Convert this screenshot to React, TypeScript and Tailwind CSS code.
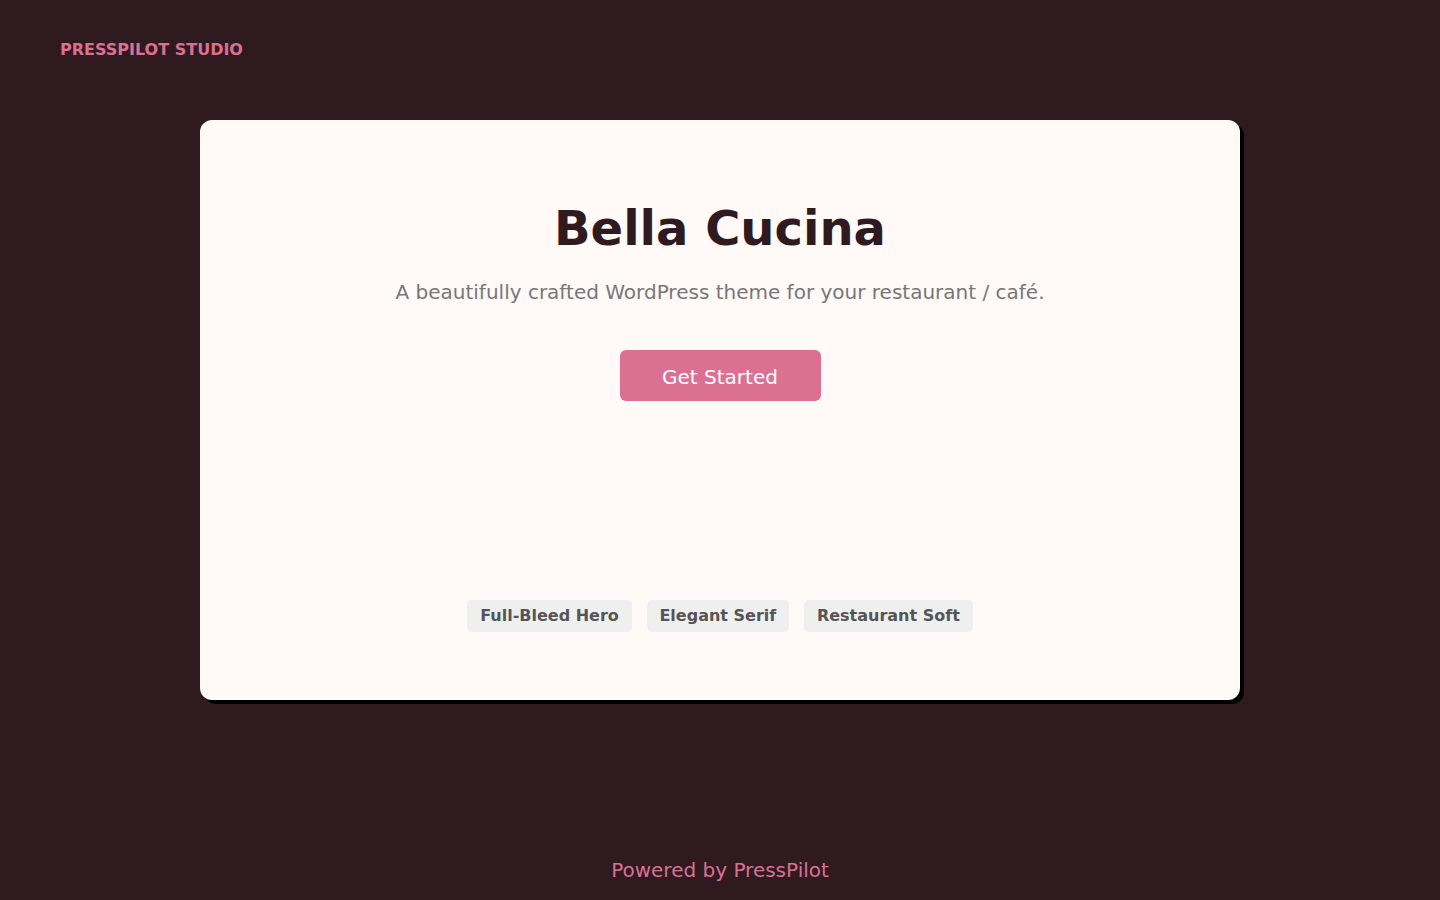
import React from "react";

const tags = ["Full-Bleed Hero", "Elegant Serif", "Restaurant Soft"];

const App = () => {
  return (
    <div
      className="bg-[#2e1a1f] w-full min-h-screen h-[900px] flex flex-col"
      style={{ fontFamily: '"DejaVu Sans", sans-serif' }}
    >
      <header className="px-[60px] pt-10 h-[120px]">
        <p className="text-[16px] leading-[19px] font-bold text-[#db7093]">
          PRESSPILOT STUDIO
        </p>
      </header>

      <main className="flex justify-center">
        <div className="bg-[#fff9f7] w-[1040px] h-[580px] rounded-xl shadow-[4px_4px_0_#000] flex flex-col items-center pt-20">
          <h1 className="text-[48px] leading-[56px] font-bold text-[#2e1a1f]">
            Bella Cucina
          </h1>
          <p className="mt-6 text-[20px] leading-6 text-[#777]">
            A beautifully crafted WordPress theme for your restaurant / café.
          </p>
          <button className="mt-[46px] w-[201px] h-[51px] rounded-md bg-[#db7093] text-white text-[20px] pt-[2px]">
            Get Started
          </button>
          <div className="mt-[199px] flex gap-[15px]">
            {tags.map((t) => (
              <span
                key={t}
                className="bg-[#efefef] text-[#555] text-[16px] font-bold h-8 px-[12.8px] rounded-[5px] flex items-center"
              >
                {t}
              </span>
            ))}
          </div>
        </div>
      </main>

      <footer className="mt-auto pb-[18px] text-center">
        <p className="text-[20px] leading-6 text-[#db7093]">Powered by PressPilot</p>
      </footer>
    </div>
  );
};

export default App;
